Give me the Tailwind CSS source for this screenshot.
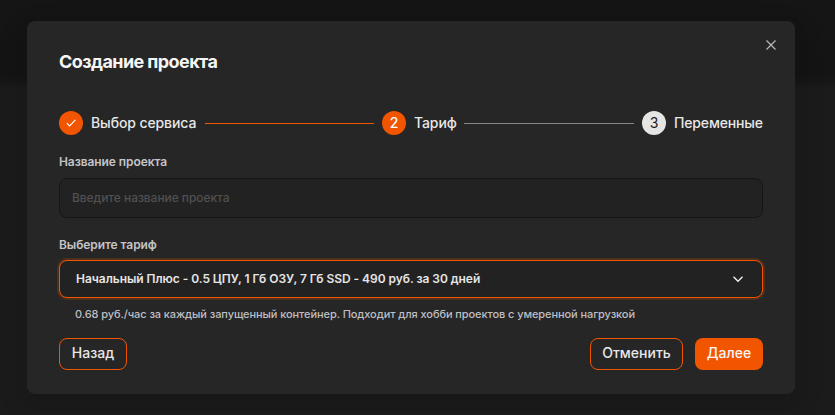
<!DOCTYPE html>
<html lang="ru">
<head>
<meta charset="utf-8">
<title>Создание проекта</title>
<script src="https://cdn.jsdelivr.net/npm/@tailwindcss/browser@4"></script>
</head>
<body class="h-[415px] overflow-hidden bg-[linear-gradient(to_bottom,#151515_0px,#141414_76px,#1b1b1b_90px,#1b1b1b_415px)] px-[27px] pt-[21px] font-['Inter',sans-serif] text-[#e8e8e8]">
<main class="relative flex h-[373px] w-[768px] flex-col rounded-lg bg-[#262626] px-8 pt-[29px] shadow-[0_6px_16px_rgba(0,0,0,0.08),0_9px_28px_8px_rgba(0,0,0,0.05)]">
  <button class="absolute top-[18px] right-[18px] size-3" aria-label="Закрыть">
    <svg class="size-3" viewBox="0 0 12 12" fill="none" stroke="#b8b8b8" stroke-width="1.2"><path d="M1.5 1.5l9 9M10.5 1.5l-9 9"/></svg>
  </button>
  <h1 class="h-6 text-[18px] leading-6 font-bold tracking-[-0.58px] whitespace-nowrap text-[#f5f5f5]">Создание проекта</h1>
  <div class="mt-[37px] flex h-6 items-center gap-2 text-[14px] font-medium">
    <span class="flex size-6 shrink-0 items-center justify-center rounded-full bg-[#f25500]">
      <svg class="size-3" viewBox="0 0 12 12" fill="none" stroke="#fff" stroke-width="1.1"><path d="M1.8 6.2l2.8 2.7 5.8-6"/></svg>
    </span>
    <span class="w-[106px] shrink-0 pb-0.5 tracking-[-0.1px] whitespace-nowrap">Выбор сервиса</span>
    <span class="h-px w-[169px] shrink-0 bg-[#f25500]"></span>
    <span class="flex size-6 shrink-0 items-center justify-center rounded-full bg-[#f25500] pb-0.5 text-white">2</span>
    <span class="w-[42px] shrink-0 pb-0.5 tracking-[-0.1px] whitespace-nowrap">Тариф</span>
    <span class="h-px flex-1 bg-[#858585]"></span>
    <span class="flex size-6 shrink-0 items-center justify-center rounded-full bg-[#e5e5e3] pb-0.5 font-normal text-[#1c1c1c]">3</span>
    <span class="w-[89px] shrink-0 pb-0.5 tracking-[-0.15px] whitespace-nowrap">Переменные</span>
  </div>
  <label class="mt-[17px] h-5 text-[12px] leading-5 font-semibold tracking-[-0.08px] text-[#c4c4c6]">Название проекта</label>
  <div class="mt-[6px] flex h-10 items-center rounded-lg border border-[#151515] bg-[#222222] px-3 text-[12px] font-medium tracking-[-0.06px] text-[#505050]">Введите название проекта</div>
  <label class="mt-[17px] h-5 text-[12px] leading-5 font-semibold tracking-[-0.08px] text-[#c4c4c6]">Выберите тариф</label>
  <div class="mt-[5px] flex h-[38px] items-center justify-between rounded-lg border border-[#f25500] bg-[#222222] px-4 text-[12px] font-semibold tracking-[-0.05px] text-[#e5e5e5] shadow-[0_0_0_2px_rgba(242,85,0,0.2)]">
    <span class="whitespace-nowrap">Начальный Плюс - 0.5 ЦПУ, 1 Гб ОЗУ, 7 Гб SSD - 490 руб. за 30 дней</span>
    <svg class="mr-[2px] h-2.5 w-3" viewBox="0 0 12 10" fill="none" stroke="#f0f0f0" stroke-width="1.4"><path d="M1.5 2.8L6 7.3l4.5-4.5"/></svg>
  </div>
  <p class="mt-[6px] h-5 pl-4 text-[11px] leading-5 font-medium tracking-[-0.08px] whitespace-nowrap text-[#bfbfc3]">0.68 руб./час за каждый запущенный контейнер. Подходит для хобби проектов с умеренной нагрузкой</p>
  <div class="mt-[14px] flex h-8 text-[14px] font-medium">
    <button class="h-8 w-[68px] rounded-lg border border-[#f25500] pb-[3px]">Назад</button>
    <button class="ml-auto h-8 w-[93px] rounded-lg border border-[#f25500] pb-[3px]">Отменить</button>
    <button class="ml-3 h-8 w-[68px] rounded-lg bg-[#f25500] pb-[3px] text-[#f5f5f5]">Далее</button>
  </div>
</main>
</body>
</html>
